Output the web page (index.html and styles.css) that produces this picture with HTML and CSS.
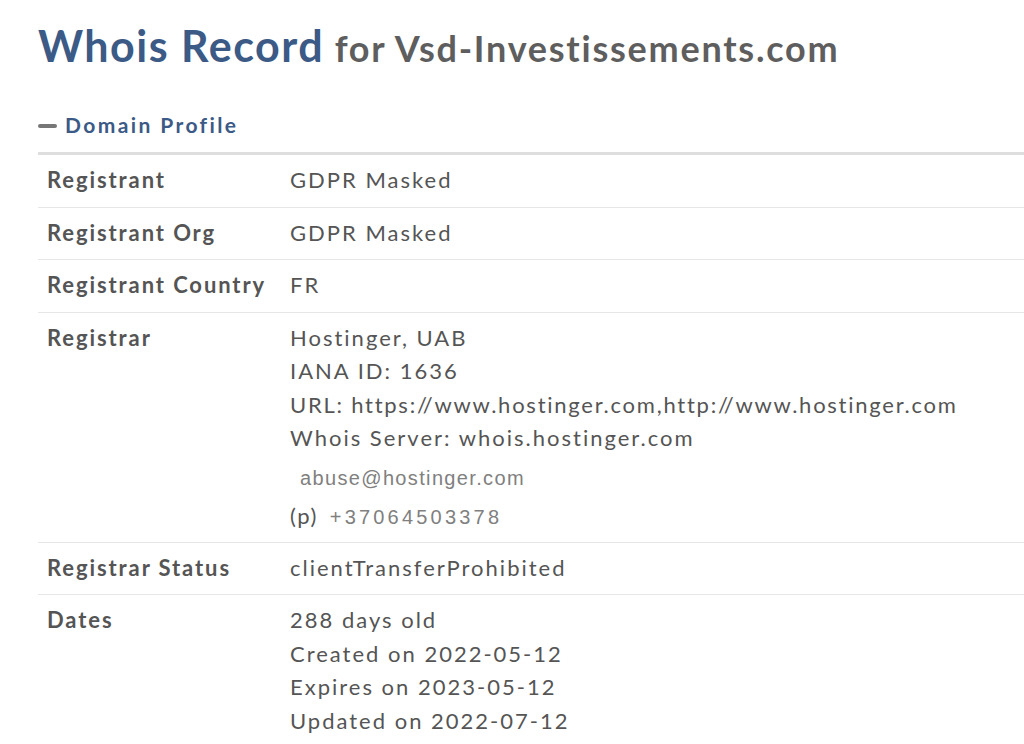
FILE: index.html
```html
<!DOCTYPE html>
<html>
<head>
<meta charset="utf-8">
<link rel="stylesheet" href="styles.css">
</head>
<body>
<div class="page">
  <h1 class="title"><span class="title-main">Whois Record</span> <span class="title-sub">for Vsd-Investissements.com</span></h1>
  <h2 class="section"><span class="minus"></span>Domain Profile</h2>
  <div class="table">
    <div class="row">
      <div class="label">Registrant</div>
      <div class="value">GDPR Masked</div>
    </div>
    <div class="row">
      <div class="label">Registrant Org</div>
      <div class="value">GDPR Masked</div>
    </div>
    <div class="row">
      <div class="label">Registrant Country</div>
      <div class="value">FR</div>
    </div>
    <div class="row">
      <div class="label">Registrar</div>
      <div class="value">
        <div class="line">Hostinger, UAB</div>
        <div class="line">IANA ID: 1636</div>
        <div class="line url">URL: https:<span class="sl">/</span>/www.hostinger.com,http:<span class="sl">/</span>/www.hostinger.com</div>
        <div class="line">Whois Server: whois.hostinger.com</div>
        <div class="contact email">abuse@hostinger.com</div>
        <div class="contact phone"><span class="p">(p)</span><span class="num">+37064503378</span></div>
      </div>
    </div>
    <div class="row">
      <div class="label">Registrar Status</div>
      <div class="value">clientTransferProhibited</div>
    </div>
    <div class="row">
      <div class="label">Dates</div>
      <div class="value">
        <div class="line">288 days old</div>
        <div class="line">Created on 2022-05-12</div>
        <div class="line">Expires on 2023-05-12</div>
        <div class="line">Updated on 2022-07-12</div>
      </div>
    </div>
  </div>
</div>
</body>
</html>
```
FILE: styles.css
```css
html, body {
  margin: 0;
  padding: 0;
  background: #fff;
}
body {
  font-family: Lato, "Open Sans", sans-serif;
  color: #555;
}
.page {
  padding: 20px 0 0 38px;
}
.title {
  margin: 0;
  font-size: 43px;
  font-weight: 700;
  line-height: 52px;
  white-space: nowrap;
}
.title-main {
  color: #3b5a86;
  font-size: 43px;
  letter-spacing: 1.5px;
}
.title-sub {
  color: #5e5e5e;
  font-size: 36px;
  letter-spacing: 1.75px;
}
.section {
  margin: 37px 0 0 0;
  padding: 0 0 13px 0;
  font-size: 21px;
  font-weight: 700;
  color: #3b5a86;
  letter-spacing: 2.4px;
  line-height: 28px;
  white-space: nowrap;
}
.minus {
  display: inline-block;
  width: 19px;
  height: 4px;
  border-radius: 2px;
  background: #777;
  vertical-align: 5px;
  margin-right: 8px;
}
.table {
  border-top: 3px solid #dedede;
}
.row {
  display: flex;
  border-bottom: 1px solid #e6e6e6;
  padding: 8px 0 10px 9px;
  font-size: 22px;
  line-height: 33.5px;
}
.label {
  width: 243px;
  flex: none;
  font-weight: 700;
  color: #555;
  letter-spacing: 1.9px;
  white-space: nowrap;
}
.value {
  color: #555;
  letter-spacing: 2px;
  white-space: nowrap;
}
.value .url {
  letter-spacing: 1.75px;
}
.sl {
  letter-spacing: -4px;
}
.contact {
  font-family: "Liberation Sans", Arial, sans-serif;
  font-size: 20px;
  color: #808080;
}
.email {
  line-height: 34px;
  margin-top: 6px;
  padding-left: 10px;
  letter-spacing: 1.35px;
}
.phone {
  line-height: 30px;
  margin-top: 6px;
}
.phone .p {
  font-family: Lato, sans-serif;
  font-size: 22px;
  color: #555;
  letter-spacing: 1.5px;
  margin-right: 12px;
}
.phone .num {
  letter-spacing: 3.2px;
}
```
